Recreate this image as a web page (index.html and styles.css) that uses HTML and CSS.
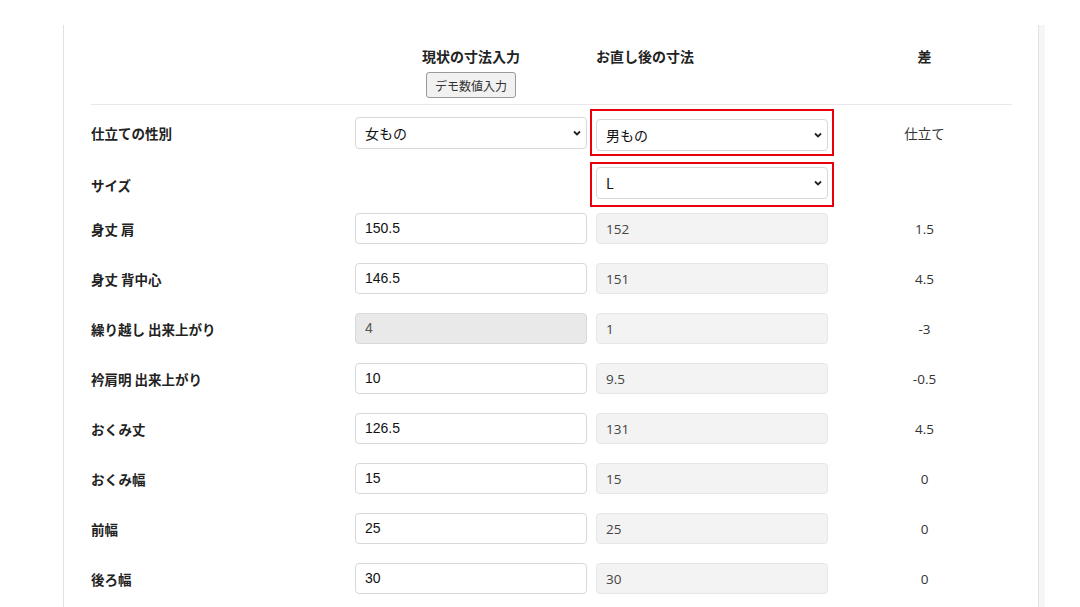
FILE: index.html
```html
<!DOCTYPE html>
<html lang="ja">
<head>
    <meta charset="utf-8">
    <link rel="stylesheet" href="styles.css">
</head>
<body>
    <div class="sheet">
        <div class="head">
            <div></div>
            <div class="head-current">
                <div class="head-title">現状の寸法入力</div>
                <button class="demo-btn">デモ数値入力</button>
            </div>
            <div class="head-title">お直し後の寸法</div>
            <div class="head-title center">差</div>
        </div>

        <div class="select-rows">
            <div class="row">
                <div class="label">仕立ての性別</div>
                <div class="select-wrap">
                    <select class="field"><option>女もの</option></select>
                    <svg class="chev" width="8" height="6" viewBox="0 0 8 6"><path d="M1 1.5l3 3 3-3" fill="none" stroke="#222" stroke-width="1.8"/></svg>
                </div>
                <div class="mark mark-a">
                    <div class="select-wrap">
                        <select class="field"><option>男もの</option></select>
                        <svg class="chev" width="8" height="6" viewBox="0 0 8 6"><path d="M1 1.5l3 3 3-3" fill="none" stroke="#222" stroke-width="1.8"/></svg>
                    </div>
                </div>
                <div class="diff">仕立て</div>
            </div>
            <div class="row">
                <div class="label">サイズ</div>
                <div></div>
                <div class="mark mark-b">
                    <div class="select-wrap">
                        <select class="field"><option>L</option></select>
                        <svg class="chev" width="8" height="6" viewBox="0 0 8 6"><path d="M1 1.5l3 3 3-3" fill="none" stroke="#222" stroke-width="1.8"/></svg>
                    </div>
                </div>
                <div class="diff"></div>
            </div>
        </div>

        <div class="field-rows">
            <div class="row">
                <div class="label">身丈 肩</div>
                <input class="field num" value="150.5">
                <input class="field after" value="152" readonly>
                <div class="diff">1.5</div>
            </div>
            <div class="row">
                <div class="label">身丈 背中心</div>
                <input class="field num" value="146.5">
                <input class="field after" value="151" readonly>
                <div class="diff">4.5</div>
            </div>
            <div class="row">
                <div class="label">繰り越し 出来上がり</div>
                <input class="field num" value="4" disabled>
                <input class="field after" value="1" readonly>
                <div class="diff">-3</div>
            </div>
            <div class="row">
                <div class="label">衿肩明 出来上がり</div>
                <input class="field num" value="10">
                <input class="field after" value="9.5" readonly>
                <div class="diff">-0.5</div>
            </div>
            <div class="row">
                <div class="label">おくみ丈</div>
                <input class="field num" value="126.5">
                <input class="field after" value="131" readonly>
                <div class="diff">4.5</div>
            </div>
            <div class="row">
                <div class="label">おくみ幅</div>
                <input class="field num" value="15">
                <input class="field after" value="15" readonly>
                <div class="diff">0</div>
            </div>
            <div class="row">
                <div class="label">前幅</div>
                <input class="field num" value="25">
                <input class="field after" value="25" readonly>
                <div class="diff">0</div>
            </div>
            <div class="row">
                <div class="label">後ろ幅</div>
                <input class="field num" value="30">
                <input class="field after" value="30" readonly>
                <div class="diff">0</div>
            </div>
        </div>
    </div>
</body>
</html>
```

FILE: styles.css
```css
body {
    margin: 0;
    padding: 0;
    background: #fff;
    font-family: "Noto Sans CJK JP", sans-serif;
    color: #222;
    overflow: hidden;
}

.sheet {
    margin: 25px 0 0 63px;
    width: 921px;
    padding: 0 26px 40px 27px;
    border-left: 1px solid #e2e2e2;
    border-right: 1px solid #e2e2e2;
    box-shadow: 6px 0 0 #f6f6f6;
    min-height: 600px;
}

.head,
.row {
    display: grid;
    grid-template-columns: 255px 232px 232px 1fr;
    column-gap: 9px;
    align-items: center;
}

.head {
    align-items: start;
    padding: 19px 0 6px;
    border-bottom: 1px solid #e8e8e8;
}

.head-current {
    display: flex;
    flex-direction: column;
    align-items: center;
}

.head-title {
    font-size: 14px;
    font-weight: bold;
    line-height: 24px;
    color: #222;
}

.head-title.center {
    text-align: center;
}

.demo-btn {
    margin-top: 4px;
    height: 26px;
    padding: 0 8px;
    font-family: "Noto Sans CJK JP", sans-serif;
    font-size: 12px;
    color: #333;
    background: #f1f1f1;
    border: 1px solid #9a9a9a;
    border-radius: 3px;
}

.select-rows {
    display: flex;
    flex-direction: column;
    gap: 6px;
    margin-top: 4px;
}

.field-rows {
    display: flex;
    flex-direction: column;
    gap: 19px;
    margin-top: 6px;
}

.label {
    font-size: 13.5px;
    font-weight: bold;
    color: #222;
}

.field {
    box-sizing: border-box;
    width: 232px;
    height: 31px;
    margin: 0;
    padding: 0 9px;
    border: 1px solid #d8d8d8;
    border-radius: 4px;
    background: #fff;
    font-size: 14px;
    color: #111;
    outline: none;
}

.num {
    font-family: "Liberation Sans", Arial, sans-serif;
    padding-bottom: 2px;
}

.num:disabled {
    background: #e9e9e9;
    color: #555;
}

.after {
    font-family: "Open Sans", sans-serif;
    font-size: 13.5px;
    color: #444;
    background: #f3f3f3;
    border-color: #e6e6e6;
}

.select-wrap {
    position: relative;
    width: 232px;
}

select.field {
    appearance: none;
    -webkit-appearance: none;
    height: 32px;
    font-family: "Noto Sans CJK JP", sans-serif;
    font-size: 14px;
    padding-left: 9px;
}

.chev {
    position: absolute;
    right: 6px;
    top: 13px;
    pointer-events: none;
}

.mark {
    margin-left: -6px;
    width: 232px;
    border: 2px solid #e8000b;
    padding: 0 4px;
}

.mark-a {
    padding-top: 8px;
    padding-bottom: 3px;
}

.mark-b {
    padding-top: 3px;
    padding-bottom: 6px;
}

.diff {
    text-align: center;
    font-family: "Open Sans", "Noto Sans CJK JP", sans-serif;
    font-size: 13.5px;
    color: #333;
}
```
